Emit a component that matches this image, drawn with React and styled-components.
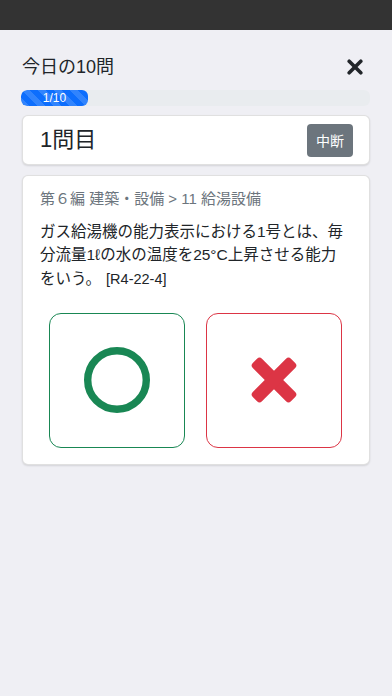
import React from "react";
import styled, { createGlobalStyle } from "styled-components";

const GlobalStyle = createGlobalStyle`
  html, body { margin: 0; padding: 0; }
  body {
    background: #efeff4;
    font-family: "Liberation Sans", "Noto Sans CJK JP", sans-serif;
    color: #212529;
  }
  * { box-sizing: border-box; }
`;

const Page = styled.div`
  min-height: 696px;
  background: #efeff4;
`;

const TopBar = styled.div`
  height: 30px;
  background: #333333;
`;

const Content = styled.div`
  padding: 0 22px 0 22px;
  display: flex;
  flex-direction: column;
`;

const Header = styled.div`
  margin-top: 24px;
  height: 26px;
  display: flex;
  align-items: center;
  justify-content: space-between;
`;

const Title = styled.h1`
  margin: 0;
  font-size: 18px;
  font-weight: 400;
  line-height: 26px;
`;

const CloseButton = styled.button`
  border: 0;
  background: none;
  padding: 0;
  margin-right: 7px;
  width: 16px;
  height: 16px;
  display: flex;
  align-items: center;
  justify-content: center;
  color: #212529;
`;

const Progress = styled.div`
  margin-top: 10px;
  margin-left: -1px;
  height: 16px;
  border-radius: 6px;
  background: #e9ecef;
  overflow: hidden;
  display: flex;
`;

const ProgressFill = styled.div`
  height: 100%;
  background-color: #0d6efd;
  background-image: linear-gradient(
    45deg,
    rgba(255, 255, 255, 0.15) 25%,
    transparent 25%,
    transparent 50%,
    rgba(255, 255, 255, 0.15) 50%,
    rgba(255, 255, 255, 0.15) 75%,
    transparent 75%,
    transparent
  );
  background-size: 16px 16px;
  border-radius: 6px;
  color: #fff;
  font-size: 12px;
  line-height: 16px;
  text-align: center;
`;

const Card = styled.div`
  background: #fff;
  border: 1px solid rgba(0, 0, 0, 0.12);
  border-radius: 6px;
  box-shadow: 0 1px 2px rgba(0, 0, 0, 0.12);
  margin-top: ${(p) => p.$mt}px;
`;

const CountCard = styled(Card)`
  height: 50px;
  display: flex;
  align-items: center;
  justify-content: space-between;
  padding: 0 16px 0 17px;
`;

const CountText = styled.div`
  font-size: 22px;
  line-height: 30px;
`;

const PauseButton = styled.button`
  border: 0;
  background: #6c757d;
  color: #fff;
  font-family: inherit;
  font-size: 14px;
  width: 46px;
  height: 33px;
  border-radius: 4px;
  padding: 0;
`;

const QuestionCard = styled(Card)`
  padding: 12px 18px 16px 17px;
`;

const Crumb = styled.div`
  color: #6c757d;
  font-size: 15px;
  line-height: 22px;
`;

const Question = styled.p`
  margin: 10px 0 0 0;
  font-size: 15.5px;
  line-height: 23.3px;
`;

const Ref = styled.span`
  font-size: 14.5px;
  margin-left: 5px;
`;

const Choices = styled.div`
  margin-top: 22px;
  display: flex;
  justify-content: center;
  gap: 21px;
`;

const Choice = styled.button`
  width: 136px;
  height: 135px;
  border-radius: 12px;
  background: #fff;
  border: 1px solid ${(p) => p.$color};
  display: flex;
  align-items: center;
  justify-content: center;
  padding: 0;
`;

const CloseIcon = () => (
  <svg width="16" height="16" viewBox="0 0 16 16">
    <g stroke="#212529" strokeWidth="3.6" strokeLinecap="round">
      <line x1="2.2" y1="2.2" x2="13.8" y2="13.8" />
      <line x1="13.8" y1="2.2" x2="2.2" y2="13.8" />
    </g>
  </svg>
);

const CircleMark = () => (
  <svg width="68" height="68" viewBox="0 0 68 68">
    <circle cx="34" cy="34" r="29.3" fill="none" stroke="#198754" strokeWidth="7.4" />
  </svg>
);

const CrossMark = () => (
  <svg width="50" height="50" viewBox="0 0 50 50">
    <g fill="#dc3545" transform="rotate(45 25 25)">
      <rect x="-2" y="18.5" width="54" height="13" rx="3.5" />
      <rect x="18.5" y="-2" width="13" height="54" rx="3.5" />
    </g>
  </svg>
);

export default function App() {
  return (
    <Page>
      <GlobalStyle />
      <TopBar />
      <Content>
        <Header>
          <Title>今日の10問</Title>
          <CloseButton aria-label="閉じる">
            <CloseIcon />
          </CloseButton>
        </Header>
        <Progress>
          <ProgressFill style={{ width: "67px" }}>1/10</ProgressFill>
        </Progress>
        <CountCard $mt={9}>
          <CountText>1問目</CountText>
          <PauseButton>中断</PauseButton>
        </CountCard>
        <QuestionCard $mt={10}>
          <Crumb>第６編 建築・設備 &gt; 11 給湯設備</Crumb>
          <Question>
            ガス給湯機の能力表示における1号とは、毎分流量1ℓの水の温度を25°C上昇させる能力をいう。
            <Ref>[R4-22-4]</Ref>
          </Question>
          <Choices>
            <Choice $color="#198754" aria-label="正しい">
              <CircleMark />
            </Choice>
            <Choice $color="#dc3545" aria-label="誤り">
              <CrossMark />
            </Choice>
          </Choices>
        </QuestionCard>
      </Content>
    </Page>
  );
}
